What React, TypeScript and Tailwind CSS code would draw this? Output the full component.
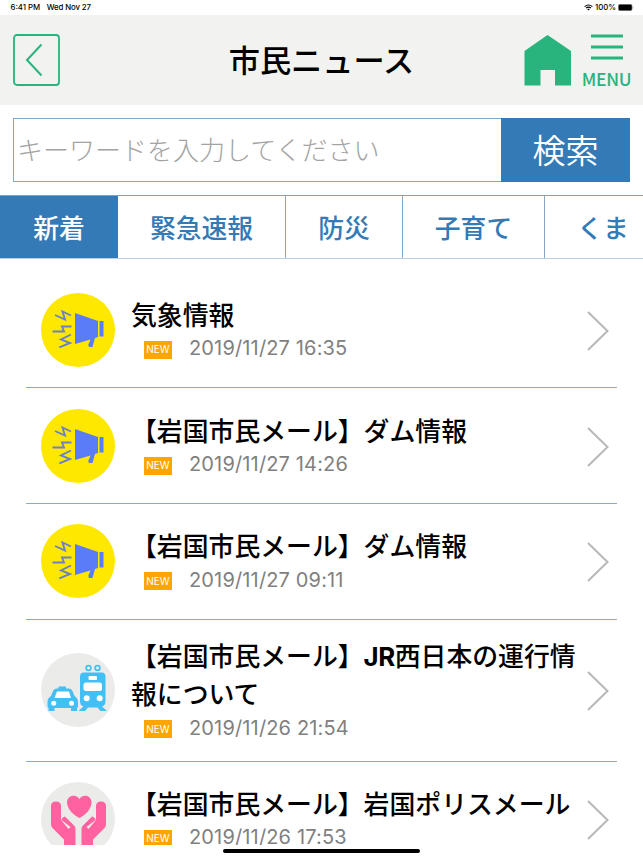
import type { ReactNode } from "react";

type IconKind = "alert" | "traffic" | "care";

const tabs = [
  { label: "新着", width: "w-[118px]" },
  { label: "緊急速報", width: "w-[168px]" },
  { label: "防災", width: "w-[117px]" },
  { label: "子育て", width: "w-[142px]" },
  { label: "くま", width: "w-[98px]" },
];

const news: { title: ReactNode; date: string; icon: IconKind }[] = [
  { title: "気象情報", date: "2019/11/27 16:35", icon: "alert" },
  { title: "【岩国市民メール】ダム情報", date: "2019/11/27 14:26", icon: "alert" },
  { title: "【岩国市民メール】ダム情報", date: "2019/11/27 09:11", icon: "alert" },
  {
    title: (
      <>
        【岩国市民メール】<span className="font-['Inter'] font-bold tracking-[-0.5px]">JR</span>西日本の運行情報について
      </>
    ),
    date: "2019/11/26 21:54",
    icon: "traffic",
  },
  { title: "【岩国市民メール】岩国ポリスメール", date: "2019/11/26 17:53", icon: "care" },
];

function AlertIcon() {
  return (
    <svg viewBox="0 0 74 74" className="h-[74px] w-[74px] shrink-0">
      <circle cx="37" cy="37" r="37" fill="#ffe800" />
      <g fill="#5b7cf7">
        <path d="M34 20 L57 28 V44 L54 45 L51.5 54 L48 54 L47.2 52 L49.5 46.5 L34 51 Z" />
        <rect x="58.5" y="28" width="4" height="15.5" />
      </g>
      <g fill="none" stroke="#6a80c8" strokeWidth="1.9">
        <path d="M14 22 L24 26.5 L21.5 18.5 L30 22.5" />
        <path d="M11.5 38.5 H23 L21 33.5 H30.5" />
        <path d="M18.3 54.3 L29 50 L20 46.5 L30 41.5" />
      </g>
    </svg>
  );
}

function TrafficIcon() {
  return (
    <svg viewBox="0 0 74 74" className="h-[74px] w-[74px] shrink-0">
      <circle cx="37" cy="37" r="37" fill="#ebebe9" />
      <g fill="#42bff5">
        <path d="M17.5 33.5 H25 V35.5 H28 Q30.5 35.5 31.5 38 L33.5 43 Q37 45 37 49 V53 Q37 54.5 36 55 V58 H30 V55 H13.5 V58 H7.5 V55 Q6.5 54 6.5 53 V49 Q6.5 45 10 43 L12 38 Q13 35.5 15.5 35.5 H17.5 Z" />
        <path d="M43 19.5 H60.5 Q64.5 19.5 64.5 23.5 V48 Q64.5 52.5 61 53.5 L66 58 H59.5 L56.5 54.5 H47 L44 58 H37.5 L42.5 53.5 Q39 52.5 39 48 V23.5 Q39 19.5 43 19.5 Z" />
      </g>
      <g fill="#fff">
        <path d="M16 38.5 H28 L30 45 H13.5 Z" />
        <circle cx="12.7" cy="50.2" r="2.5" />
        <circle cx="30.5" cy="50.2" r="2.5" />
        <rect x="47.5" y="23" width="8.5" height="4" rx="1" />
        <rect x="42.5" y="29.5" width="18.5" height="8.5" rx="2.5" />
        <circle cx="45.7" cy="45.2" r="3" />
        <circle cx="58.7" cy="45.2" r="3" />
      </g>
      <g fill="#fff" stroke="#42bff5" strokeWidth="1.8">
        <circle cx="47.5" cy="15" r="2.3" />
        <circle cx="56.5" cy="15" r="2.3" />
      </g>
    </svg>
  );
}

const handPath =
  "M10 24 Q10 19.5 15 19.5 Q20 19.5 20 24 V38 L27.5 47 L29.5 45 L20.5 38 Q21 35 24 34.5 L33.5 44 Q34.5 45 34.5 47 V66 H23 V57.5 L11 45.5 Q10 44 10 42 Z";

function CareIcon() {
  return (
    <svg viewBox="0 0 74 74" className="h-[74px] w-[74px] shrink-0">
      <circle cx="37" cy="37" r="37" fill="#ebebe9" />
      <g fill="#ff629e">
        <path d="M38.5 36 C34 34 26 27.5 26 20.5 C26 13 35 11.5 38.5 17 C42 11.5 50.5 13 50.5 20.5 C50.5 27.5 43 34 38.5 36 Z" />
        <path d={handPath} />
        <path d={handPath} transform="matrix(-1 0 0 1 75 0)" />
      </g>
    </svg>
  );
}

function NewsIcon({ kind }: { kind: IconKind }) {
  if (kind === "traffic") return <TrafficIcon />;
  if (kind === "care") return <CareIcon />;
  return <AlertIcon />;
}

function StatusBar() {
  return (
    <div className="flex h-[15px] shrink-0 items-center justify-between pl-[10.5px] pr-[9px] font-['Inter',sans-serif] text-[7.8px] font-medium text-black">
      <div className="flex gap-[6.5px]">
        <span>6:41 PM</span>
        <span className="tracking-[-0.1px]">Wed Nov 27</span>
      </div>
      <div className="flex items-center gap-[2px]">
        <svg viewBox="0 0 10 7" className="h-[7px] w-[9px]">
          <path d="M.7 2.5 Q5 -1 9.3 2.5 M2.3 4.1 Q5 2 7.7 4.1" fill="none" stroke="#000" strokeWidth="1.2" />
          <path d="M3.5 5.3 Q5 4.2 6.5 5.3 L5 6.9 Z" />
        </svg>
        <span>100%</span>
        <svg viewBox="0 0 16 7" className="h-[7px] w-[16px]">
          <rect x=".3" y=".3" width="13.8" height="6.4" rx="1.6" fill="#000" stroke="#999" strokeWidth=".6" />
          <path d="M14.8 2.3 Q16 3.5 14.8 4.7 Z" fill="#999" />
        </svg>
      </div>
    </div>
  );
}

function Header() {
  return (
    <header className="grid h-[90px] shrink-0 grid-cols-[1fr_auto_1fr] items-center bg-[#f2f2f0] px-[13px]">
      <button type="button" aria-label="戻る" className="w-[47px]">
        <svg viewBox="0 0 47 52" className="h-[52px] w-[47px]" fill="none" stroke="#28b47c">
          <rect x="1" y="1" width="45" height="50" rx="3" strokeWidth="1.8" />
          <path d="M28.5 10.5 L14 26 L28.5 41.5" strokeWidth="2" />
        </svg>
      </button>
      <h1 className="pb-[3px] text-[31.2px] font-medium leading-none text-black">市民ニュース</h1>
      <div className="flex items-start justify-end gap-3 pt-px">
        <svg viewBox="0 0 47 52" className="h-[52px] w-[47px]" fill="#28b47c">
          <path d="M23.5 1 L47 17 V51.5 H31 V36 H16.5 V51.5 H0.5 V17 Z" />
        </svg>
        <button type="button" className="flex w-[47px] flex-col items-center">
          <svg viewBox="0 0 32 27" className="h-[27px] w-8" fill="#28b47c">
            <rect y="0.5" width="32" height="3" />
            <rect y="11.5" width="32" height="3" />
            <rect y="22.5" width="32" height="3" />
          </svg>
          <span className="mt-[9px] text-[17.5px] font-medium leading-[18px] tracking-[-0.3px] text-[#28b47c]">
            MENU
          </span>
        </button>
      </div>
    </header>
  );
}

export default function App() {
  return (
    <div className="relative flex h-[858px] w-[643px] flex-col overflow-hidden bg-white font-['Noto_Sans_CJK_JP',sans-serif]">
      <StatusBar />
      <Header />

      <form className="mx-[13px] mt-[13px] flex h-16 shrink-0">
        <input
          type="text"
          placeholder="キーワードを入力してください"
          className="min-w-0 flex-1 border border-r-0 border-[#82a9cb] pb-1 pl-[3px] text-[26px] font-light text-gray-700 placeholder:text-[#a3a3a3]"
        />
        <button type="button" className="w-[129px] bg-[#337ab7] pb-0.5 text-[33px] font-[350] leading-none text-white">
          検索
        </button>
      </form>

      <nav className="mt-[13px] flex h-16 shrink-0 border-y border-t-[#76a3cb] border-b-[#b9d0e5]">
        {tabs.map((tab, i) => (
          <button
            key={tab.label}
            type="button"
            className={`shrink-0 whitespace-nowrap text-[25.8px] font-medium leading-none ${tab.width} ${
              i === 0 ? "bg-[#337ab7] text-white" : "text-[#337ab7]"
            } ${i > 0 && i < 4 ? "border-r border-[#82a9cb]" : ""} ${i === 4 ? "pl-[18px]" : ""}`}
          >
            {tab.label}
          </button>
        ))}
      </nav>

      <ul className="mx-[26px] mt-[13.4px] h-[572.6px] shrink-0 overflow-hidden">
        {news.map((item) => (
          <li
            key={item.date}
            className={`flex items-center border-b border-[#86add0] pl-[15px] pr-2 ${
              item.icon === "traffic" ? "h-[141.8px]" : "h-[115.8px]"
            }`}
          >
            <NewsIcon kind={item.icon} />
            <div className="ml-4 w-[450px]">
              <h2 className="text-[25.85px] font-medium leading-9 text-black">{item.title}</h2>
              <div className="flex h-8 items-center pl-[13px]">
                <span className="mt-1 flex h-[18px] w-7 items-center justify-center bg-[#ffa500] font-['Inter',sans-serif] text-[10px] text-white">
                  NEW
                </span>
                <time className="ml-[17px] pt-px font-['Inter',sans-serif] text-[20px] tracking-[0.15px] text-[#808080]">
                  {item.date}
                </time>
              </div>
            </div>
            <svg viewBox="0 0 22 40" className="ml-auto mt-0.5 h-10 w-[22px] shrink-0" fill="none" stroke="#b8b8b8" strokeWidth="2">
              <path d="M1 1 L20.5 20 L1 39" />
            </svg>
          </li>
        ))}
      </ul>

      <div className="absolute bottom-[5px] left-[223px] h-[4px] w-[197px] rounded-full bg-black" />
    </div>
  );
}
